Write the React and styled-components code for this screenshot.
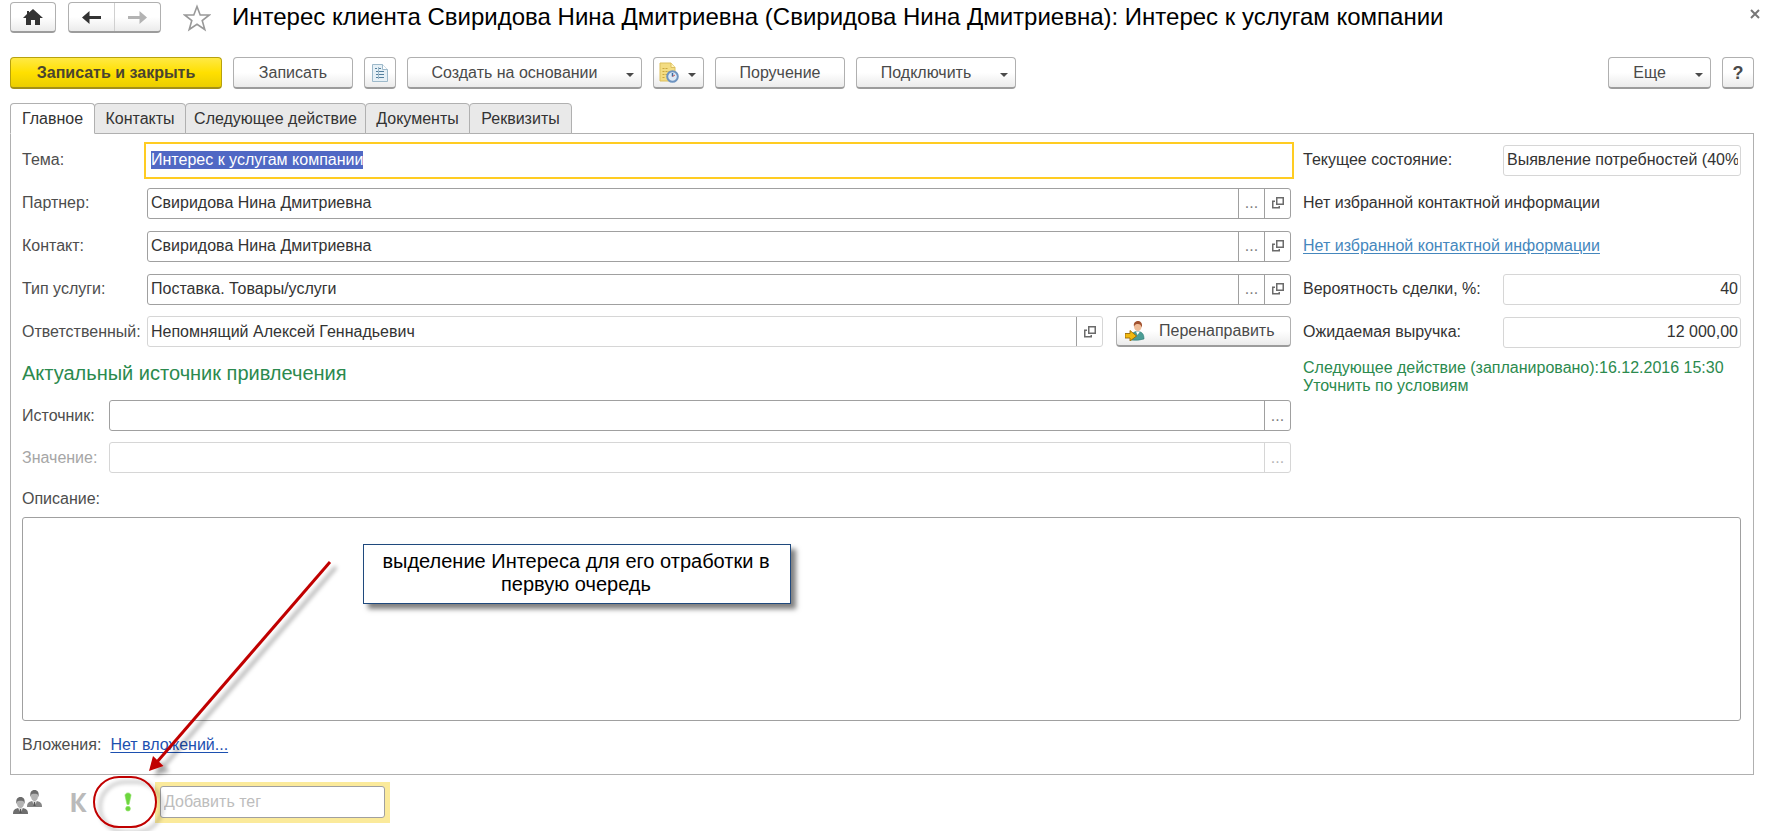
import React, { useEffect, useRef } from "react";
import styled, { createGlobalStyle, css } from "styled-components";

const GlobalStyle = createGlobalStyle`
  *, *::before, *::after { box-sizing: border-box; }
  body {
    margin: 0;
    background: #fff;
    color: #333;
    font: 16px/18px "Liberation Sans", Arial, sans-serif;
  }
  button, input, textarea { font: inherit; color: inherit; }
`;

const Page = styled.div`
  position: relative;
  padding: 2px 17px 0 10px;
`;

/* ---------- title bar ---------- */

const TitleBar = styled.header`
  display: flex;
  align-items: center;
  height: 31px;
`;

const raised = css`
  border: 1px solid #b0b0b0;
  border-bottom: 2px solid #9c9c9c;
  border-radius: 4px;
  background: linear-gradient(#fff 50%, #ebebeb);
`;

const HomeButton = styled.button`
  ${raised}
  display: grid;
  place-items: center;
  width: 46px;
  height: 31px;
  padding: 0;
  margin-right: 12px;
`;

const NavGroup = styled.div`
  ${raised}
  display: flex;
  width: 93px;
  height: 31px;
`;

const NavButton = styled.button`
  flex: 1;
  display: grid;
  place-items: center;
  padding: 0;
  border: 0;
  background: none;
  & + & { border-left: 1px solid #d0d0d0; }
`;

const StarButton = styled.button`
  width: 28px;
  height: 28px;
  margin: 0 21px 0 22px;
  padding: 0;
  border: 0;
  background: none;
`;

const Title = styled.h1`
  flex: 1;
  margin: 0;
  padding-bottom: 2px;
  color: #000;
  font-size: 24px;
  line-height: 28px;
  font-weight: 400;
  white-space: nowrap;
`;

const CloseButton = styled.button`
  display: grid;
  place-items: center;
  width: 14px;
  height: 14px;
  margin: 0 -8px 8px 0;
  padding: 0;
  border: 0;
  background: none;
`;

/* ---------- command bar ---------- */

const CommandBar = styled.div`
  display: flex;
  gap: 11px;
  margin-top: 24px;
`;

const Button = styled.button`
  ${raised}
  display: flex;
  align-items: center;
  justify-content: center;
  position: relative;
  width: ${(p) => p.$w}px;
  height: 32px;
  padding: 0 ${(p) => (p.$menu ? 20 : 0)}px 0 0;
  color: #4a4a4a;
  white-space: nowrap;
  ${(p) =>
    p.$primary &&
    css`
      border-color: #b7a10e;
      border-bottom-color: #a39018;
      background: linear-gradient(#ffe944, #ffe000 50%, #ebce00);
      color: #4a4530;
      font-weight: 700;
    `}
`;

const Caret = styled.span`
  position: absolute;
  right: 7px;
  bottom: 10px;
  border: 4px solid transparent;
  border-top-color: #4a4a4a;
  border-bottom: 0;
`;

const Spacer = styled.div`
  flex: 1;
`;

const HelpMark = styled.span`
  font-size: 18px;
  font-weight: 700;
`;

/* ---------- tabs ---------- */

const Tabs = styled.div`
  display: flex;
  margin-top: 14px;
`;

const Tab = styled.button`
  width: ${(p) => p.$w}px;
  height: 31px;
  margin: 0 0 -1px -1px;
  padding: 0;
  border: 1px solid #b0b0b0;
  border-radius: 4px 4px 0 0;
  background: #e9e9e9;
  color: #333;
  white-space: nowrap;
  &:first-child { margin-left: 0; }
  ${(p) =>
    p.$active &&
    css`
      z-index: 1;
      border-bottom-color: #fff;
      background: #fff;
    `}
`;

const Panel = styled.main`
  border: 1px solid #b0b0b0;
  padding: 10px 12px 0 11px;
`;

/* ---------- form ---------- */

const Columns = styled.div`
  display: grid;
  grid-template-columns: minmax(0, 1fr) 438px;
  gap: 12px;
`;

const Stack = styled.div`
  display: flex;
  flex-direction: column;
  gap: 11px;
`;

const Row = styled.div`
  display: grid;
  grid-template-columns: ${(p) => p.$label}px minmax(0, 1fr) auto;
  align-items: center;
  height: ${(p) => p.$h || 32}px;
`;

const Label = styled.label`
  color: ${(p) => (p.$dim ? "#a6a6a6" : p.$dark ? "#333" : "#4d4d4d")};
  white-space: nowrap;
`;

const Field = styled.div`
  display: flex;
  height: 31px;
  border: 1px solid ${(p) => (p.$light ? "#d6d6d6" : "#a0a0a0")};
  border-radius: 3px;
  ${(p) =>
    p.$current &&
    css`
      border-color: #fff;
      border-radius: 0;
      outline: 2px solid #fc2;
      outline-offset: 1px;
    `}
`;

const Input = styled.input`
  flex: 1;
  min-width: 0;
  height: 100%;
  padding: 0 2px 0 3px;
  border: 0;
  outline: 0;
  background: none;
  text-align: ${(p) => (p.$right ? "right" : "left")};
  &::selection { background: #5068c4; color: #fff; }
  &::placeholder { color: #bdbdbd; opacity: 1; }
`;

const FieldButton = styled.button`
  display: grid;
  place-items: center;
  width: 26px;
  padding: 0;
  border: 0;
  border-left: 1px solid ${(p) => (p.$light ? "#d6d6d6" : "#a0a0a0")};
  background: none;
  color: ${(p) => (p.$light ? "#b5b5b5" : "#808080")};
`;

const Redirect = styled.button`
  ${raised}
  display: flex;
  align-items: center;
  gap: 14px;
  width: 175px;
  height: 31px;
  margin-left: 13px;
  padding: 0 0 0 8px;
  color: #4a4a4a;
`;

const Heading = styled.h2`
  margin: 0;
  color: #2b8a4e;
  font-size: 20px;
  line-height: 31px;
  font-weight: 400;
`;

const InfoLine = styled.div`
  height: 32px;
  line-height: 32px;
  white-space: nowrap;
`;

const Link = styled.a`
  color: ${(p) => (p.$soft ? "#4587bd" : "#1c50b0")};
  text-decoration: underline;
  text-underline-offset: 2px;
`;

const NextAction = styled.p`
  margin: 0;
  color: #2b8a4e;
  white-space: nowrap;
`;

const DescriptionLabel = styled(Label)`
  display: block;
  padding: 17px 0 9px;
`;

const Description = styled.textarea`
  display: block;
  width: 100%;
  height: 204px;
  padding: 4px;
  border: 1px solid #a0a0a0;
  border-radius: 3px;
  outline: 0;
  resize: none;
`;

const Attachments = styled.div`
  display: flex;
  gap: 9px;
  padding: 15px 0 20px;
  color: #4d4d4d;
`;

/* ---------- footer ---------- */

const Footer = styled.footer`
  display: flex;
  align-items: center;
  height: 56px;
  padding: 0 0 2px 1px;
`;

const FlagButton = styled.button`
  display: grid;
  place-items: center;
  width: ${(p) => p.$w}px;
  height: 30px;
  padding: 0;
  border: 0;
  background: none;
  color: #bababa;
  font: 700 26px/30px "Open Sans", sans-serif;
`;

const TagBox = styled.div`
  width: 235px;
  margin-left: 10px;
  padding: 4px 5px 5px;
  background: #fbea9b;
`;

const TagField = styled(Field)`
  height: 32px;
  background: #fff;
`;

/* ---------- annotation ---------- */

const Callout = styled.div`
  position: absolute;
  left: 363px;
  top: 544px;
  width: 428px;
  padding: 5px 12px 7px 10px;
  border: 1px solid #1f497d;
  background: #fff;
  box-shadow: 5px 5px 5px rgba(0, 0, 0, 0.5);
  color: #000;
  font-size: 20px;
  line-height: 23px;
  text-align: center;
`;

const Pointer = styled.svg`
  position: absolute;
  left: 80px;
  top: 550px;
  pointer-events: none;
`;

/* ---------- icons ---------- */

const HomeIcon = () => (
  <svg width="20" height="17" viewBox="0 0 20 17" fill="#333">
    <path d="M10 0 20 9h-3v7h-5v-5H8v5H3V9H0l4-4V2h2v1.500z" />
  </svg>
);

const ArrowIcon = ({ forward }) => (
  <svg width="19" height="13" viewBox="0 0 19 13" fill={forward ? "#b3b3b3" : "#333"}>
    <path d={forward ? "M19 6.500 11.500 0v5H0v3h11.500v5z" : "M0 6.500 7.500 0v5H19v3H7.500v5z"} />
  </svg>
);

const StarIcon = () => (
  <svg width="28" height="28" viewBox="0 0 28 28" fill="none" stroke="#999" strokeWidth="1.600">
    <path d="M14 2.500 17.200 11H26.300L19.200 16.500 21.800 25.500 14 20.300 6.200 25.500 8.800 16.500 1.700 11H10.800z" />
  </svg>
);

const CloseIcon = () => (
  <svg width="10" height="10" viewBox="0 0 10 10" stroke="#777" strokeWidth="2">
    <path d="M1 1 9 9M9 1 1 9" />
  </svg>
);

const ReportIcon = () => (
  <svg width="16" height="18" viewBox="0 0 16 18">
    <path d="M.5.5H10.500L15.500 5.500V17.500H.5z" fill="#e6f0f6" stroke="#9db9ca" />
    <path d="M10.500.5V5.500H15.500" fill="#fff" stroke="#9db9ca" />
    <path d="M3 4.500h2M6 4.500h3M4 7.500h2M7 7.500h5M4 10.500h2M7 10.500h5M4 13.500h2M7 13.500h5" stroke="#54809e" />
    <path d="M6.500 3v12" stroke="#9db9ca" />
  </svg>
);

const NoteIcon = () => (
  <svg width="20" height="21" viewBox="0 0 20 21">
    <path d="M1 1H12L16 5.500V19H1z" fill="#f3dc82" stroke="#dcbf5c" />
    <path d="M12 1V5.500H16" fill="#fff3bd" stroke="#dcbf5c" />
    <path d="M3.500 6.500h6M3.500 9.500h8M3.500 12.500h5M3.500 15.500h3" stroke="#c9a63f" strokeDasharray="2 1" />
    <circle cx="13.500" cy="14.500" r="5.300" fill="#dbe8f5" stroke="#6d93c0" strokeWidth="2" />
    <path d="M13.500 11v3.500" fill="none" stroke="#3f6b9e" strokeWidth="1.500" />
    <path d="M13.500 14.500 16 13" stroke="#c55" />
  </svg>
);

const OpenIcon = () => (
  <svg width="12" height="12" viewBox="0 0 12 12" fill="none" stroke="#6b6b6b" strokeWidth="1.500">
    <path d="M4.750.75H11.250V7.250H4.750z" />
    <path d="M3 4.250H.75V10.750H7.250V9" />
  </svg>
);

const RedirectIcon = () => (
  <svg width="20" height="20" viewBox="0 0 20 20">
    <path d="M6 19c0-6 2-8.500 6.500-8.500S19 13 19 18q-6 2-13 1z" fill="#4b9d95" stroke="#2d7c77" strokeWidth=".6" />
    <path d="M11 10.500 12.500 14l2.500-3.500z" fill="#fff" />
    <ellipse cx="12.800" cy="5.500" rx="3.800" ry="4.700" fill="#efbd98" />
    <path d="M9 5.500C8 1.500 11 0 13 0s5 1.500 3.800 6.500C16 4 15 3 13 3s-3 .5-4 2.500z" fill="#a1512f" />
    <path d="M0 12.500h5V9.500L11.500 15 5 20v-3H0z" fill="#f2b90f" stroke="#9a6a05" strokeWidth=".9" />
  </svg>
);

const Person = ({ x, y, tone }) => (
  <g transform={`translate(${x} ${y})`}>
    <path d="M0 17c0-4 1.500-5 5-6h5c3.500 1 5 2 5 6z" fill={tone} />
    <path d="M5 11 7.500 16 10 11z" fill="#ddd" />
    <path d="M7 12h1l.6 4h-2.200z" fill="#555" />
    <ellipse cx="7.500" cy="6.500" rx="3.500" ry="4.700" fill="#b4b4b4" />
    <path d="M3.600 7.500C2.500 2 4.500 0 7.500 0s5 2 3.900 7.500C11 4 10 3.800 7.500 3.800S4 4 3.600 7.500z" fill="#6c6c6c" />
  </g>
);

const PeopleIcon = () => (
  <svg width="30" height="24" viewBox="0 0 30 24">
    <Person x={14} y={0} tone="#858585" />
    <Person x={0} y={7} tone="#6e6e6e" />
  </svg>
);

const ImportantIcon = () => (
  <svg width="8" height="20" viewBox="0 0 8 20" fill="#6cd63d" stroke="#8be063" strokeWidth=".6">
    <path d="M1 3.500C1 0 7 0 7 3.500L5 12.500H3z" />
    <circle cx="4" cy="16.700" r="2.400" />
  </svg>
);

/* ---------- composed parts ---------- */

const Reference = ({ id, label, value, labelWidth = 125, height, light, darkCells, select = true, open = true, children }) => (
  <Row $label={labelWidth} $h={height}>
    <Label htmlFor={id} $dim={light && !value}>{label}</Label>
    <Field $light={light}>
      <Input id={id} defaultValue={value} disabled={light && !value} />
      {select && <FieldButton $light={light && !darkCells} aria-label="Выбрать">...</FieldButton>}
      {open && <FieldButton $light={light && !darkCells} aria-label="Открыть"><OpenIcon /></FieldButton>}
    </Field>
    {children}
  </Row>
);

const Readout = ({ id, label, value, right }) => (
  <Row $label={200}>
    <Label htmlFor={id} $dark>{label}</Label>
    <Field $light>
      <Input id={id} defaultValue={value} readOnly $right={right} />
    </Field>
  </Row>
);

const tabs = [
  { name: "Главное", width: 85 },
  { name: "Контакты", width: 92 },
  { name: "Следующее действие", width: 181 },
  { name: "Документы", width: 105 },
  { name: "Реквизиты", width: 103 },
];

export default function App() {
  const subject = useRef(null);
  useEffect(() => {
    subject.current.focus();
    subject.current.select();
  }, []);

  return (
    <Page>
      <GlobalStyle />
      <TitleBar>
        <HomeButton aria-label="Домой"><HomeIcon /></HomeButton>
        <NavGroup>
          <NavButton aria-label="Назад"><ArrowIcon /></NavButton>
          <NavButton aria-label="Вперед"><ArrowIcon forward /></NavButton>
        </NavGroup>
        <StarButton aria-label="В избранное"><StarIcon /></StarButton>
        <Title>Интерес клиента Свиридова Нина Дмитриевна (Свиридова Нина Дмитриевна): Интерес к услугам компании</Title>
        <CloseButton aria-label="Закрыть"><CloseIcon /></CloseButton>
      </TitleBar>

      <CommandBar>
        <Button $w={212} $primary>Записать и закрыть</Button>
        <Button $w={120}>Записать</Button>
        <Button $w={32} aria-label="Отчет"><ReportIcon /></Button>
        <Button $w={235} $menu>Создать на основании<Caret /></Button>
        <Button $w={51} $menu aria-label="Напоминание"><NoteIcon /><Caret /></Button>
        <Button $w={130}>Поручение</Button>
        <Button $w={160} $menu>Подключить<Caret /></Button>
        <Spacer />
        <Button $w={103} $menu>Еще<Caret /></Button>
        <Button $w={32} aria-label="Справка"><HelpMark>?</HelpMark></Button>
      </CommandBar>

      <Tabs role="tablist">
        {tabs.map(({ name, width }, i) => (
          <Tab key={name} role="tab" aria-selected={i === 0} $active={i === 0} $w={width}>{name}</Tab>
        ))}
      </Tabs>

      <Panel>
        <Columns>
          <Stack>
            <Row $label={125}>
              <Label htmlFor="subject">Тема:</Label>
              <Field $current>
                <Input id="subject" ref={subject} defaultValue="Интерес к услугам компании" />
              </Field>
            </Row>
            <Reference id="partner" label="Партнер:" value="Свиридова Нина Дмитриевна" />
            <Reference id="contact" label="Контакт:" value="Свиридова Нина Дмитриевна" />
            <Reference id="service" label="Тип услуги:" value="Поставка. Товары/услуги" />
            <Reference id="owner" label="Ответственный:" value="Непомнящий Алексей Геннадьевич" height={31} light darkCells select={false}>
              <Redirect><RedirectIcon />Перенаправить</Redirect>
            </Reference>
            <Heading>Актуальный источник привлечения</Heading>
            <Reference id="source" label="Источник:" labelWidth={87} height={31} open={false} />
            <Reference id="value" label="Значение:" labelWidth={87} height={31} light open={false} />
          </Stack>

          <Stack>
            <Readout id="state" label="Текущее состояние:" value="Выявление потребностей (40%)" />
            <InfoLine>Нет избранной контактной информации</InfoLine>
            <InfoLine><Link $soft href="#contacts">Нет избранной контактной информации</Link></InfoLine>
            <Readout id="chance" label="Вероятность сделки, %:" value="40" right />
            <Readout id="revenue" label="Ожидаемая выручка:" value="12 000,00" right />
            <NextAction>
              Следующее действие (запланировано):16.12.2016 15:30
              <br />
              Уточнить по условиям
            </NextAction>
          </Stack>
        </Columns>

        <DescriptionLabel htmlFor="description">Описание:</DescriptionLabel>
        <Description id="description" />
        <Attachments>
          <span>Вложения:</span>
          <Link href="#attachments">Нет вложений...</Link>
        </Attachments>
      </Panel>

      <Footer>
        <FlagButton $w={34} aria-label="Участники"><PeopleIcon /></FlagButton>
        <FlagButton $w={66}>К</FlagButton>
        <FlagButton $w={34} aria-label="Важно"><ImportantIcon /></FlagButton>
        <TagBox>
          <TagField>
            <Input placeholder="Добавить тег" aria-label="Добавить тег" />
          </TagField>
        </TagBox>
      </Footer>

      <Callout>выделение Интереса для его отработки в первую очередь</Callout>
      <Pointer width="270" height="282" viewBox="80 550 270 282">
        <defs>
          <filter id="soft" x="-20%" y="-20%" width="140%" height="140%">
            <feDropShadow dx="6" dy="5" stdDeviation="2" floodColor="#000" floodOpacity=".35" />
          </filter>
        </defs>
        <g filter="url(#soft)">
          <path d="M330 562 157 762" stroke="#c00000" strokeWidth="3" />
          <path d="M149 771 153 756 163.500 766z" fill="#c00000" />
        </g>
        <rect x="94" y="777" width="62" height="50" rx="25" fill="none" stroke="#c00000" strokeWidth="2" filter="url(#soft)" />
      </Pointer>
    </Page>
  );
}
